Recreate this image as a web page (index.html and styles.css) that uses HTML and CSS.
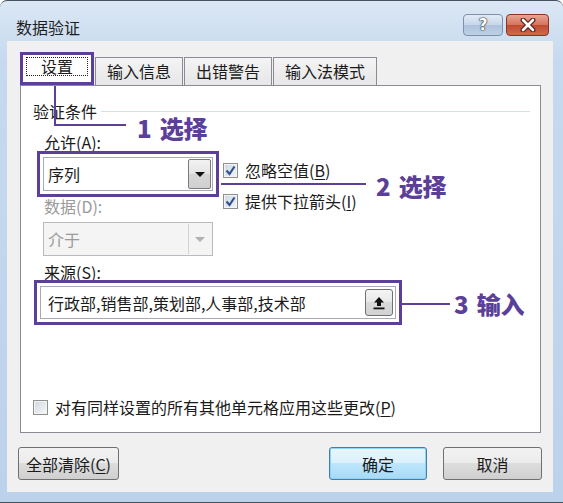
FILE: index.html
```html
<!DOCTYPE html>
<html lang="zh-CN">
<head>
  <meta charset="UTF-8">
  <title>数据验证</title>
  <link rel="stylesheet" href="styles.css">
</head>
<body>
  <div class="window">
    <div class="titlebar">
      <span class="title">数据验证</span>
      <div class="caption">
        <span class="cap-btn help">?</span>
        <span class="cap-btn close">
          <svg width="16" height="14" viewBox="0 0 16 14">
            <path d="M3 2 L13 12 M13 2 L3 12" stroke="#5a2318" stroke-width="5" stroke-linecap="round"/>
            <path d="M3 2 L13 12 M13 2 L3 12" stroke="#fff" stroke-width="2.6" stroke-linecap="round"/>
          </svg>
        </span>
      </div>
    </div>

    <div class="client">
      <div class="tabs">
        <div class="tab active"><span class="focus">设置</span></div>
        <div class="tab">输入信息</div>
        <div class="tab">出错警告</div>
        <div class="tab">输入法模式</div>
      </div>

      <div class="panel">
        <div class="group-title">验证条件</div>

        <div class="label">允许(<u>A</u>):</div>
        <div class="row">
          <div class="mark">
            <div class="combo">
              <span class="combo-text">序列</span>
              <span class="drop"><span class="arrow"></span></span>
            </div>
          </div>
          <div class="checks">
            <div class="check">
              <span class="box checked">
                <svg width="11" height="11" viewBox="0 0 11 11"><path d="M1.5 5.5 L4.5 9 L9.5 1.5" fill="none" stroke="#34508f" stroke-width="2.2"/></svg>
              </span>
              <span>忽略空值(<u>B</u>)</span>
            </div>
            <div class="check">
              <span class="box checked">
                <svg width="11" height="11" viewBox="0 0 11 11"><path d="M1.5 5.5 L4.5 9 L9.5 1.5" fill="none" stroke="#34508f" stroke-width="2.2"/></svg>
              </span>
              <span>提供下拉箭头(<u>I</u>)</span>
            </div>
          </div>
        </div>

        <div class="label disabled">数据(D):</div>
        <div class="combo off">
          <span class="combo-text">介于</span>
          <span class="drop"><span class="arrow"></span></span>
        </div>

        <div class="label">来源(<u>S</u>):</div>
        <div class="mark source-mark">
          <div class="source">
            <span class="source-text">行政部,销售部,策划部,人事部,技术部</span>
            <span class="ref-btn">
              <svg width="12" height="14" viewBox="0 0 12 14">
                <path d="M6 1 L1 6.5 L4 6.5 L4 10 L8 10 L8 6.5 L11 6.5 Z" fill="#111"/>
                <rect x="0.5" y="11.5" width="11" height="1.8" fill="#111"/>
              </svg>
            </span>
          </div>
        </div>

        <div class="spacer"></div>
        <div class="check apply">
          <span class="box"></span>
          <span>对有同样设置的所有其他单元格应用这些更改(<u>P</u>)</span>
        </div>
      </div>

      <div class="buttons">
        <span class="btn wide">全部清除(<u>C</u>)</span>
        <span class="btn default">确定</span>
        <span class="btn">取消</span>
      </div>
    </div>

    <!-- callouts drawn over the dialog -->
    <div class="line line-1"></div>
    <div class="note note-1"><span class="num">1</span>选择</div>
    <div class="line line-2"></div>
    <div class="note note-2"><span class="num">2</span>选择</div>
    <div class="line line-3"></div>
    <div class="note note-3"><span class="num">3</span>输入</div>
  </div>
</body>
</html>
```

FILE: styles.css
```css
* {
  box-sizing: border-box;
}
body {
  margin: 0;
  font-family: "Noto Sans CJK SC", "Microsoft YaHei", sans-serif;
  font-size: 16px;
  color: #1a1a1a;
}
u {
  text-decoration-thickness: 1px;
  text-underline-offset: 2px;
}

/* window frame */
.window {
  position: relative;
  width: 563px;
  height: 503px;
  display: flex;
  flex-direction: column;
  padding: 0 10px 10px 7px;
  background: linear-gradient(#dbe7f4, #c6d9ee 60px, #bcd2ea);
  border-top: 1px solid #46525e;
  border-bottom: 1px solid #46525e;
  border-radius: 7px 7px 0 0;
}
.titlebar {
  height: 40px;
  display: flex;
  justify-content: space-between;
  align-items: flex-start;
  padding: 13px 4px 0 9px;
}
.title {
  margin-top: 3px;
  line-height: 20px;
  color: #1e1e1e;
}
.caption {
  display: flex;
  gap: 3px;
}
.cap-btn {
  height: 22px;
  display: flex;
  align-items: center;
  justify-content: center;
  border-radius: 4px;
}
.help {
  width: 40px;
  border: 1px solid #7d92aa;
  background: linear-gradient(#e3ecf6, #c6d6e8 50%, #aec3db 50%, #bcd0e6);
  color: #fff;
  font-family: "DejaVu Sans", sans-serif;
  font-weight: bold;
  font-size: 15px;
  text-shadow: 0 0 1px #333, 0 0 1px #333, 0 0 2px #445;
}
.close {
  width: 43px;
  border: 1px solid #8a3424;
  background: linear-gradient(#e8a594, #d5735d 50%, #c04a30 50%, #d06a4c);
}

/* client area */
.client {
  flex: 1;
  display: flex;
  flex-direction: column;
  padding: 0 12px 0 13px;
  background: #f0f0f0;
}
.tabs {
  display: flex;
  align-items: flex-end;
  height: 33px;
  margin-top: 11px;
}
.tab {
  height: 28px;
  padding: 0 11px;
  line-height: 26px;
  border: 1px solid #898c95;
  border-bottom: none;
  margin-right: 1px;
  background: linear-gradient(#f4f4f4, #e6e6e6);
}
.tab.active {
  height: 33px;
  padding: 2px 3px 0;
  border: 3px solid #5b3f98;
  background: #fff;
  margin-right: 1px;
  position: relative;
  z-index: 1;
}
.focus {
  display: block;
  padding: 0 14px;
  line-height: 17px;
  border: 1px dotted #222;
}

.panel {
  flex: 1;
  display: flex;
  flex-direction: column;
  align-items: flex-start;
  padding: 0 10px 15px 12px;
  background: #fff;
  border: 1px solid #898c95;
}
.group-title {
  align-self: stretch;
  display: flex;
  align-items: center;
  gap: 4px;
  margin-top: 15px;
  line-height: 20px;
}
.group-title::after {
  content: "";
  flex: 1;
  border-top: 1px solid #d5dfe5;
}
.label {
  margin: 12px 0 0 11px;
  line-height: 18px;
}
.label.disabled {
  margin-top: 0;
  color: #9a9a9a;
}
.row {
  display: flex;
  align-items: flex-start;
}
.mark {
  margin-left: 4px;
  padding: 3px;
  border: 3px solid #5b3f98;
}
.combo {
  width: 170px;
  height: 34px;
  display: flex;
  align-items: center;
  padding: 1px 1px 1px 4px;
  border: 1px solid #a8abb2;
  background: #fff;
}
.combo-text {
  flex: 1;
}
.drop {
  width: 23px;
  height: 30px;
  display: flex;
  align-items: center;
  justify-content: center;
  border: 1px solid #7a7a7a;
  border-radius: 2px;
  background: linear-gradient(#f3f3f3, #e4e4e4 50%, #d6d6d6 50%, #d0d0d0);
}
.arrow {
  width: 0;
  height: 0;
  border-left: 5px solid transparent;
  border-right: 5px solid transparent;
  border-top: 5px solid #111;
}
.combo.off {
  margin: 7px 0 0 10px;
  background: #f4f4f4;
  border-color: #b7babe;
  color: #9a9a9a;
}
.combo.off .drop {
  border: none;
  border-left: 1px solid #d2d2d2;
  border-radius: 0;
  background: #f4f4f4;
}
.combo.off .arrow {
  border-top-color: #b0b0b0;
}
.checks {
  display: flex;
  flex-direction: column;
  gap: 11px;
  margin: 9px 0 -14px 4px;
}
.check {
  display: flex;
  align-items: center;
  gap: 7px;
  line-height: 20px;
}
.box {
  width: 15px;
  height: 15px;
  display: flex;
  align-items: center;
  justify-content: center;
  border: 1px solid #8e8f8f;
  background: linear-gradient(135deg, #cfd6de, #f6f8fa);
  box-shadow: inset 0 0 0 1px #f4f4f4;
}
.box.checked {
  background: linear-gradient(135deg, #cbd6e4, #f2f5f9);
}
.mark.source-mark {
  margin: -1px 0 0 1px;
}
.label.disabled + .combo + .label {
  margin-top: 7px;
}
.source {
  width: 356px;
  height: 33px;
  display: flex;
  align-items: center;
  padding: 0 2px 0 7px;
  border: 1px solid #a8abb2;
  background: #fff;
}
.source-text {
  flex: 1;
}
.ref-btn {
  width: 28px;
  height: 27px;
  display: flex;
  align-items: center;
  justify-content: center;
  border: 1px solid #707070;
  border-radius: 3px;
  background: linear-gradient(#f4f4f4, #e8e8e8 50%, #dadada 50%, #d2d2d2);
}
.spacer {
  flex: 1;
}

/* bottom buttons */
.buttons {
  display: flex;
  gap: 16px;
  height: 33px;
  margin: 14px -1px 12px -2px;
}
.btn {
  width: 99px;
  display: flex;
  align-items: center;
  justify-content: center;
  border: 1px solid #707070;
  border-radius: 3px;
  background: linear-gradient(#f2f2f2, #ebebeb 50%, #dddddd 50%, #cfcfcf);
}
.btn.wide {
  width: 101px;
  margin-right: auto;
}
.btn.default {
  width: 98px;
  border-color: #3c7fb1;
  box-shadow: inset 0 0 0 1px #8fd4f5;
  background: linear-gradient(#eaf6fd, #d9f0fc 50%, #bee6fd 50%, #a7d9f5);
}

/* callouts */
.line {
  position: absolute;
  border-color: #5b3f98;
  border-style: solid;
  border-width: 0;
}
.line-1 {
  left: 54px;
  top: 85px;
  width: 72px;
  height: 40px;
  border-left-width: 2px;
  border-bottom-width: 2px;
}
.line-2 {
  left: 221px;
  top: 182px;
  width: 145px;
  border-top-width: 2px;
}
.line-3 {
  left: 402px;
  top: 302px;
  width: 48px;
  border-top-width: 2px;
}
.note {
  position: absolute;
  font-size: 24px;
  line-height: 24px;
  font-weight: 900;
  color: #5b3f98;
}
.num {
  margin-right: 8px;
}
.note-1 {
  left: 137px;
  top: 115px;
}
.note-2 {
  left: 376px;
  top: 173px;
}
.note-3 {
  left: 454px;
  top: 291px;
}
```
